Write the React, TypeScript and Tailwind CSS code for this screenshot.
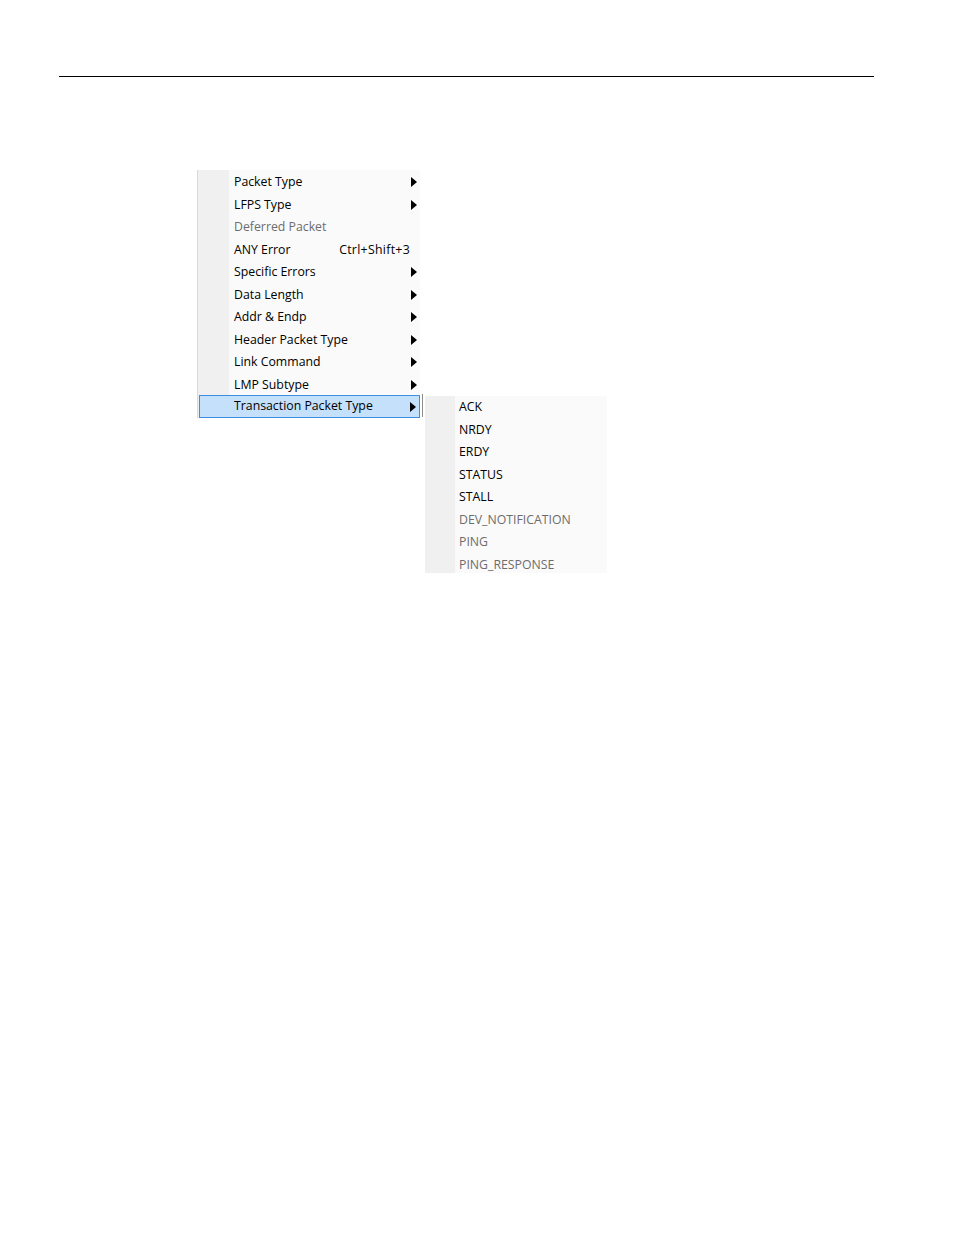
import React from "react";

type Item = { label: string; shortcut?: string; sub?: boolean; disabled?: boolean; active?: boolean };

const mainItems: Item[] = [
	{ label: "Packet Type", sub: true },
	{ label: "LFPS Type", sub: true },
	{ label: "Deferred Packet", disabled: true },
	{ label: "ANY Error", shortcut: "Ctrl+Shift+3" },
	{ label: "Specific Errors", sub: true },
	{ label: "Data Length", sub: true },
	{ label: "Addr & Endp", sub: true },
	{ label: "Header Packet Type", sub: true },
	{ label: "Link Command", sub: true },
	{ label: "LMP Subtype", sub: true },
	{ label: "Transaction Packet Type", sub: true, active: true },
];

const subItems: Item[] = [
	{ label: "ACK" },
	{ label: "NRDY" },
	{ label: "ERDY" },
	{ label: "STATUS" },
	{ label: "STALL" },
	{ label: "DEV_NOTIFICATION", disabled: true },
	{ label: "PING", disabled: true },
	{ label: "PING_RESPONSE", disabled: true },
];

const Arrow = () => (
	<svg width="6" height="10" viewBox="0 0 6 10" className="shrink-0">
		<path d="M0 0 L6 5 L0 10 Z" fill="#000" />
	</svg>
);

const MenuRow = ({ item }: { item: Item }) => {
	const text = item.disabled ? "text-[#6d6d6d]" : "text-black";
	if (item.active) {
		return (
			<div className="flex h-[23px] items-center ml-[1px] -mt-[1px] w-[221px] bg-[#c4e0fa] border border-[#3d8ee0]">
				<div className="w-[34px]" />
				<span className={`flex-1 ${text}`}>{item.label}</span>
				<div className="w-[9px] flex items-center">{item.sub && <Arrow />}</div>
			</div>
		);
	}
	return (
		<div className="flex h-[22.5px] items-center">
			<div className="w-[36px] h-full" />
			<span className={`flex-1 ${text}`}>{item.label}</span>
			{item.shortcut && <span className="mr-[10px] text-black tracking-[0.3px]">{item.shortcut}</span>}
			{item.sub && (
				<div className="w-[9px] flex items-center">
					<Arrow />
				</div>
			)}
		</div>
	);
};

export default function App() {
	return (
		<div
			className="w-[954px] h-[1235px] bg-white text-[12.3px]"
			style={{ fontFamily: '"Open Sans", "Noto Sans", sans-serif' }}
		>
			<div className="pt-[76px] pl-[59px]">
				<div className="w-[815px] h-px bg-black" />
			</div>
			<div className="flex items-start pl-[197px] pt-[93px]">
				<div className="relative w-[223px] bg-[#fafafa] border-l border-[#d9d9d9]">
					<div className="absolute left-0 top-0 bottom-0 w-[31px] bg-[#f0f0f0]" />
					<div className="relative pt-[1px]">
						{mainItems.map((it) => (
							<MenuRow key={it.label} item={it} />
						))}
					</div>
				</div>
				<div className="mt-[224px] ml-[2px] w-[1px] h-[23px] bg-[#8c8c8c]" />
				<div className="mt-[226px] ml-[2px] relative w-[182px] h-[177px] bg-[#fafafa]">
					<div className="absolute left-0 top-0 bottom-0 w-[30px] bg-[#f0f0f0]" />
					<div className="relative">
						{subItems.map((it) => (
							<div key={it.label} className="flex h-[22.5px] items-center pl-[34px]">
								<span className={it.disabled ? "text-[#6d6d6d]" : "text-black"}>{it.label}</span>
							</div>
						))}
					</div>
				</div>
			</div>
		</div>
	);
}
